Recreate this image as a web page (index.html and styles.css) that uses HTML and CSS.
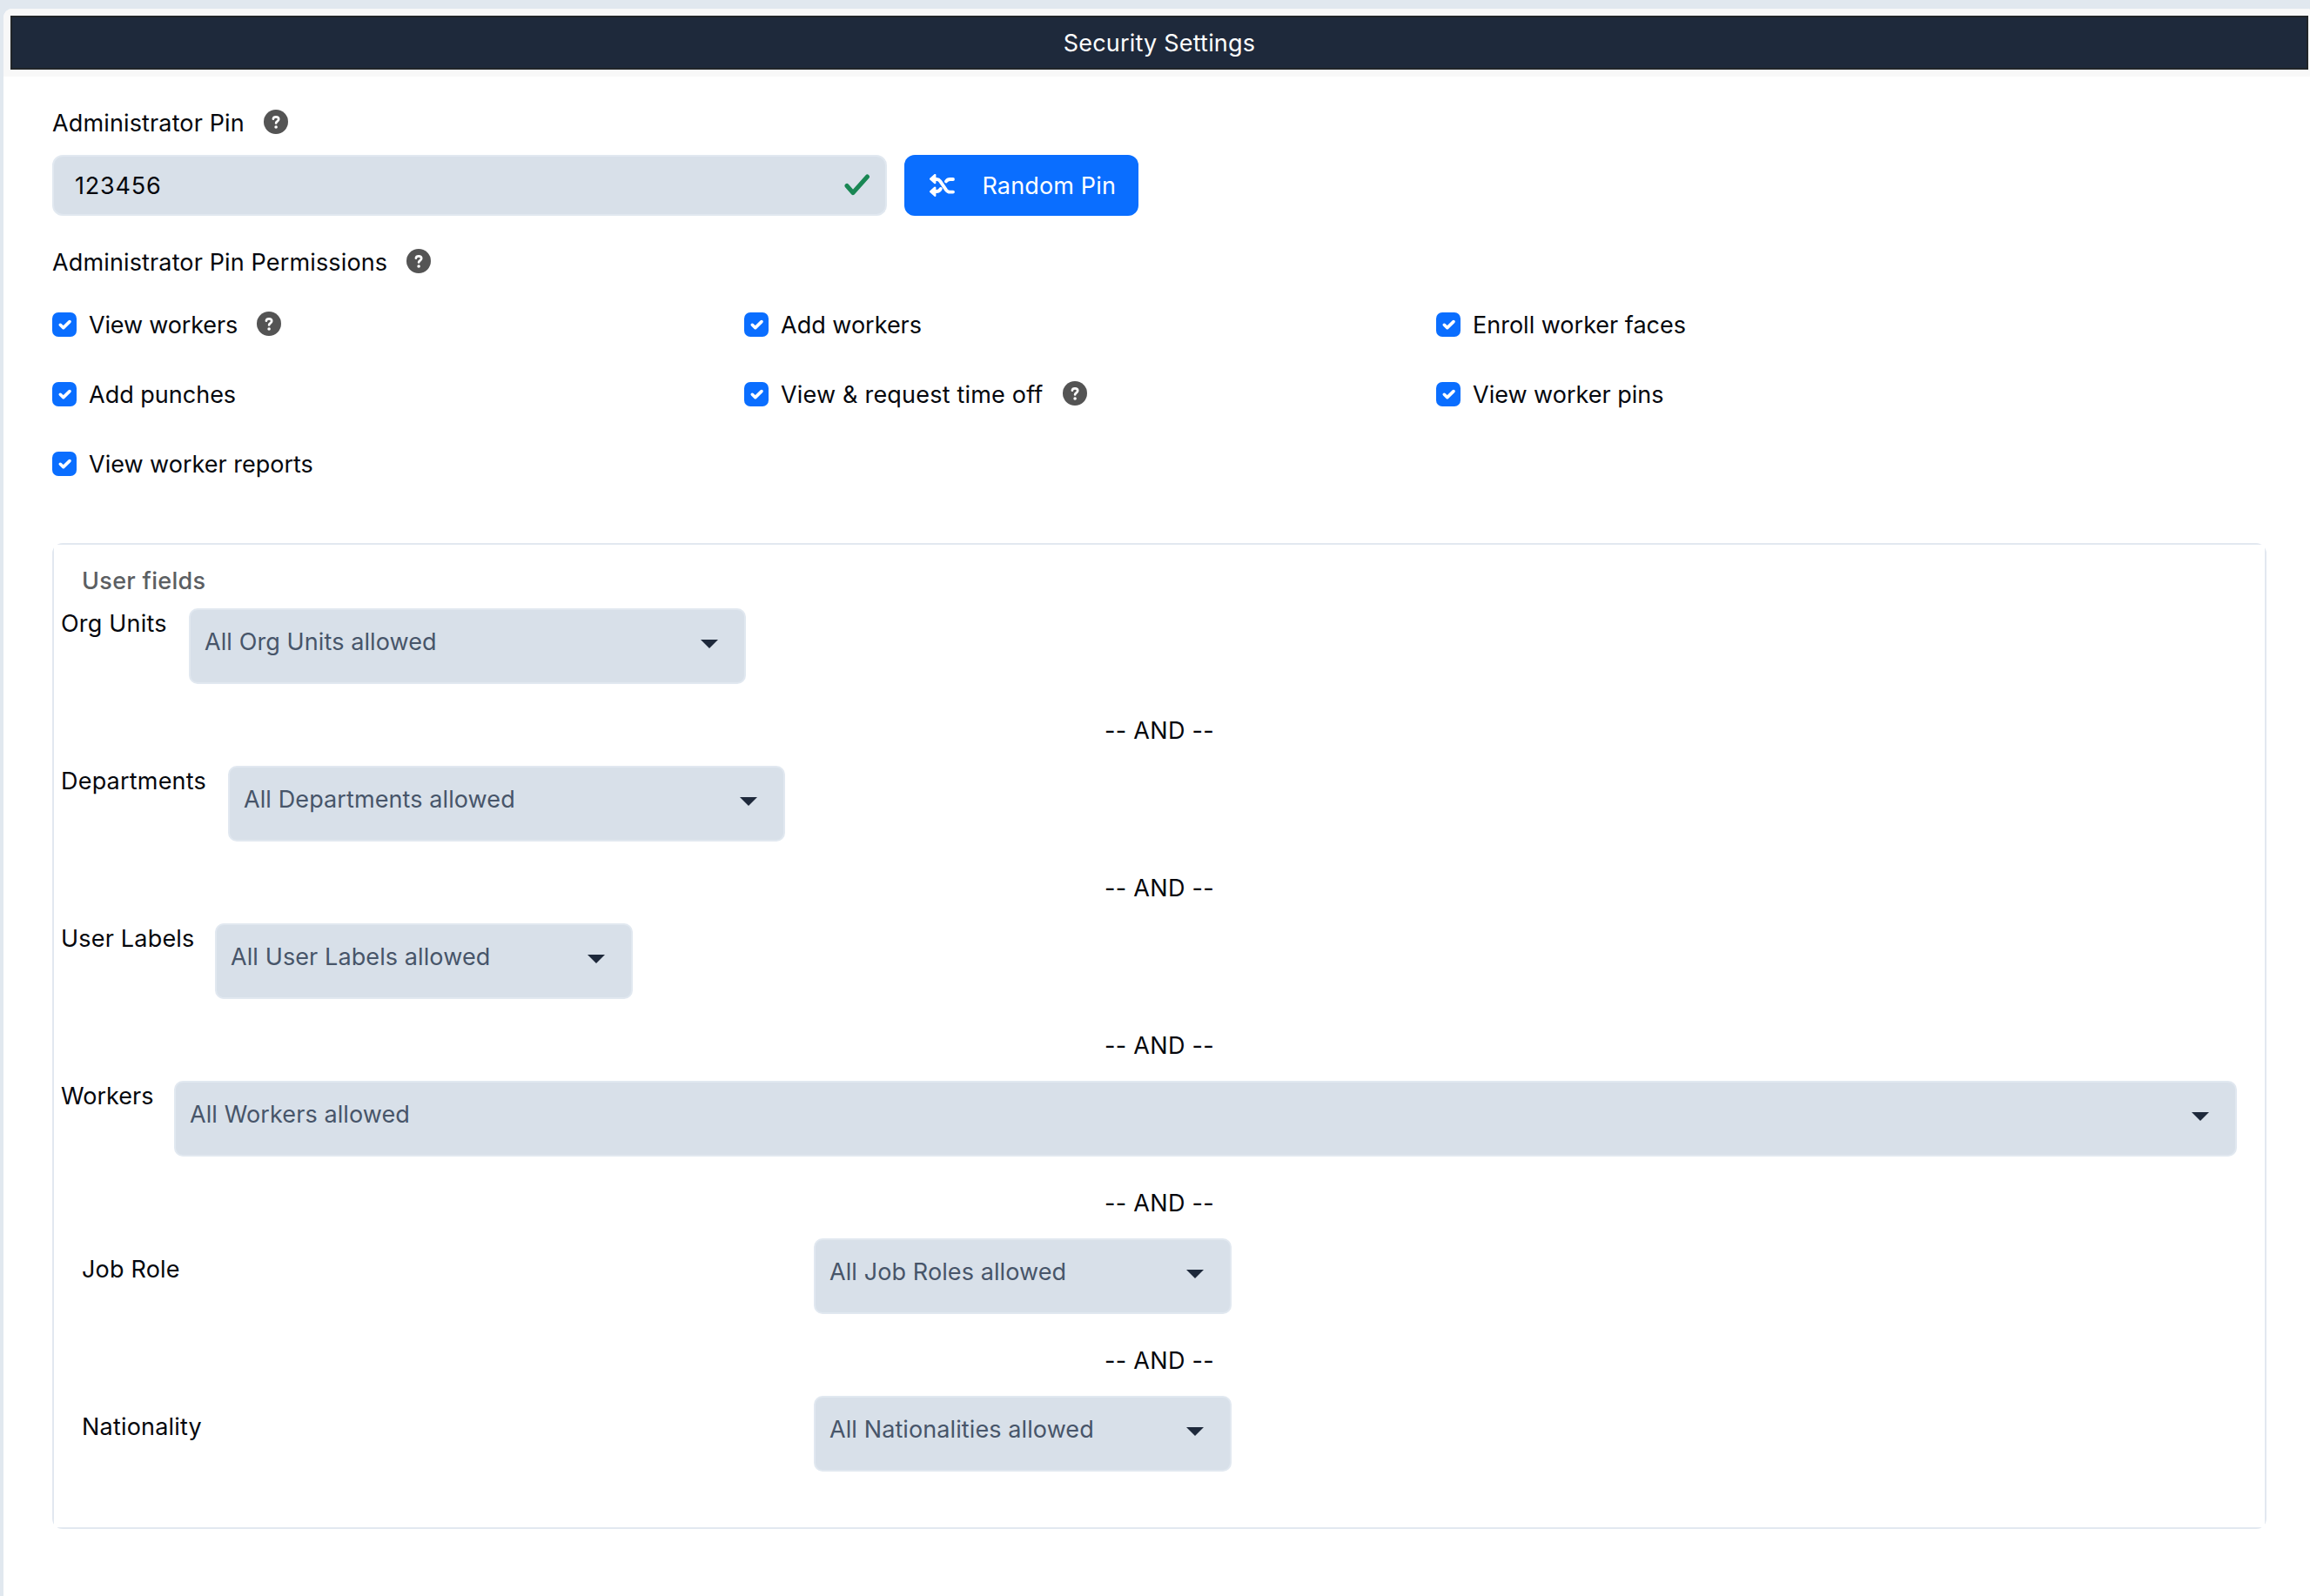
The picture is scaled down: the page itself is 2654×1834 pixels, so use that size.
FILE: index.html
```html
<!DOCTYPE html>
<html lang="en">
<head>
    <meta charset="UTF-8">
    <meta name="viewport" content="width=device-width, initial-scale=1.0">
    <title>Security Settings</title>
    <link rel="stylesheet" href="styles.css">
</head>
<body>
    <!-- shared icons -->
    <svg class="icon-defs" width="0" height="0">
        <symbol id="icon-help" viewBox="0 0 28 28">
            <circle cx="14" cy="14" r="14" fill="#545454"/>
            <path d="M10.900 10.600c.2-1.500 1.400-2.200 3.100-2.200 1.900 0 3.200 1 3.200 2.600 0 2.300-3.100 2.300-3.100 4.500" fill="none" stroke="#fff" stroke-width="2.700" stroke-linecap="round"/>
            <circle cx="14.100" cy="20" r="1.800" fill="#fff"/>
        </symbol>
        <symbol id="icon-check" viewBox="0 0 28 28">
            <path d="M9.300 14.300l3.500 3.300 7.200-7" fill="none" stroke="#fff" stroke-width="3.600" stroke-linecap="round" stroke-linejoin="round"/>
        </symbol>
    </svg>

    <div class="card">
        <div class="card-header">
            <div class="title-bar">Security Settings</div>
        </div>

        <div class="card-body">
            <div class="label-row">
                <span>Administrator Pin</span>
                <svg class="help"><use href="#icon-help"/></svg>
            </div>

            <!-- pin input -->
            <div class="pin-row">
                <div class="pin-input">
                    <span>123456</span>
                    <svg class="valid" viewBox="0 0 30 26"><path d="M3 13.500l7 8L26.500 3" fill="none" stroke="#198754" stroke-width="5" stroke-linecap="round" stroke-linejoin="round"/></svg>
                </div>
                <button class="btn-random">
                    <svg class="shuffle" viewBox="0 0 30 26">
                        <path d="M27 20.600h-3.500c-2 0-3.300-.8-4.400-2.300l-7-10.200c-1-1.400-2.300-2.100-4.100-2.100H6M27 6h-3.500c-2 0-3.500.8-4.600 2.500M12.800 17c-1.200 2.200-2.600 3-4.800 3H6" fill="none" stroke="#fff" stroke-width="3.800" stroke-linecap="round"/>
                        <path d="M1.200 5.600l5-4.500v9zM1.200 20.200l5-4.500v9z" fill="#fff" stroke="#fff" stroke-width="2.400" stroke-linejoin="round"/>
                    </svg>
                    <span>Random Pin</span>
                </button>
            </div>

            <div class="label-row">
                <span>Administrator Pin Permissions</span>
                <svg class="help"><use href="#icon-help"/></svg>
            </div>

            <!-- permissions -->
            <div class="permissions">
                <div class="permission tight"><svg class="checkbox"><use href="#icon-check"/></svg><span>View workers</span><svg class="help"><use href="#icon-help"/></svg></div>
                <div class="permission"><svg class="checkbox"><use href="#icon-check"/></svg><span>Add workers</span></div>
                <div class="permission"><svg class="checkbox"><use href="#icon-check"/></svg><span>Enroll worker faces</span></div>
                <div class="permission"><svg class="checkbox"><use href="#icon-check"/></svg><span>Add punches</span></div>
                <div class="permission loose"><svg class="checkbox"><use href="#icon-check"/></svg><span>View &amp; request time off</span><svg class="help"><use href="#icon-help"/></svg></div>
                <div class="permission"><svg class="checkbox"><use href="#icon-check"/></svg><span>View worker pins</span></div>
                <div class="permission"><svg class="checkbox"><use href="#icon-check"/></svg><span>View worker reports</span></div>
            </div>

            <!-- user fields -->
            <div class="user-fields">
                <div class="fields-inner">
                    <div class="legend">User fields</div>

                    <div class="field">
                        <span class="field-label org">Org Units</span>
                        <div class="select"><span>All Org Units allowed</span><i class="caret"></i></div>
                    </div>
                    <div class="and">-- AND --</div>
                    <div class="field">
                        <span class="field-label dep">Departments</span>
                        <div class="select"><span>All Departments allowed</span><i class="caret"></i></div>
                    </div>
                    <div class="and">-- AND --</div>
                    <div class="field">
                        <span class="field-label lab">User Labels</span>
                        <div class="select small"><span>All User Labels allowed</span><i class="caret"></i></div>
                    </div>
                    <div class="and">-- AND --</div>
                    <div class="field">
                        <span class="field-label wor">Workers</span>
                        <div class="select full"><span>All Workers allowed</span><i class="caret"></i></div>
                    </div>
                    <div class="and">-- AND --</div>
                    <div class="field wide">
                        <span class="field-label">Job Role</span>
                        <div class="select small"><span>All Job Roles allowed</span><i class="caret"></i></div>
                    </div>
                    <div class="and">-- AND --</div>
                    <div class="field wide">
                        <span class="field-label">Nationality</span>
                        <div class="select small"><span>All Nationalities allowed</span><i class="caret"></i></div>
                    </div>
                </div>
            </div>
        </div>
    </div>
</body>
</html>
```
FILE: styles.css
```css
* {
    box-sizing: border-box;
}

body {
    margin: 0;
    padding: 10px 0 0 4px;
    height: 1834px;
    overflow: hidden;
    background: #e1e8ef;
    color: #05070d;
    font-family: Inter, "Liberation Sans", sans-serif;
    font-size: 27px;
    line-height: 42px;
    white-space: nowrap;
}

.icon-defs {
    position: absolute;
}

/* card */
.card {
    height: 1824px;
    background: #fff;
    border-radius: 10px 2px 0 0;
    overflow: hidden;
}

.card-header {
    height: 78px;
    padding: 8px 2px 8px 8px;
    background: #f8f8f8;
}

.title-bar {
    height: 62px;
    border: 2px solid #212529;
    background: #1e293b;
    color: #fff;
    line-height: 59px;
    text-align: center;
    letter-spacing: 0.2px;
}

.card-body {
    padding: 32px 50px 0 56px;
}

.label-row {
    display: flex;
    align-items: center;
    gap: 22px;
    height: 42px;
    letter-spacing: 0.14px;
}

.label-row span {
    padding-top: 1px;
}

.help {
    width: 28px;
    height: 28px;
    margin-top: -2px;
}

/* pin */
.pin-row {
    display: flex;
    gap: 20px;
    margin: 16px 0 32px;
}

.pin-input {
    display: flex;
    justify-content: space-between;
    align-items: center;
    width: 959px;
    height: 70px;
    padding: 0 17px 0 24px;
    border: 2px solid #e1e8f0;
    border-radius: 12px;
    background: #d8e0e9;
}

.pin-input span {
    padding-top: 2px;
    letter-spacing: 0.8px;
}

.valid {
    width: 30px;
    height: 26px;
}

.btn-random {
    display: flex;
    justify-content: space-between;
    align-items: center;
    width: 269px;
    height: 70px;
    padding: 0 26px 0 29px;
    border: none;
    border-radius: 12px;
    background: #0a6eff;
    color: #fff;
    font: inherit;
    letter-spacing: 0.15px;
}

.btn-random span {
    padding-top: 1px;
}

.shuffle {
    width: 30px;
    height: 26px;
}

/* permissions */
.permissions {
    display: grid;
    grid-template-columns: 795px 795px 1fr;
    grid-auto-rows: 80px;
    margin-top: 11px;
}

.permission {
    display: flex;
    align-items: center;
    height: 80px;
}

.permission span {
    margin: 0 22px 0 14px;
    padding-top: 1px;
}

.tight {
    letter-spacing: -0.15px;
}

.loose {
    letter-spacing: 0.2px;
}

.checkbox {
    width: 28px;
    height: 28px;
    border-radius: 7px;
    background: #0a6eff;
}

/* user fields */
.user-fields {
    width: 2544px;
    height: 1133px;
    margin-top: 51px;
    border: 2px solid #e2e8f0;
    border-radius: 12px;
}

/* square corners cover the rounded ones of the border */
.fields-inner {
    height: 100%;
    padding: 21px 32px 0 8px;
    background: #fff;
}

.legend {
    padding-left: 24px;
    color: #5c5f63;
    font-weight: 500;
    line-height: 42px;
    height: 52px;
    letter-spacing: 0.3px;
}

.field {
    display: flex;
    height: 87px;
}

.field-label {
    line-height: 36px;
    letter-spacing: 0.2px;
}

.org {
    width: 147px;
}

.dep {
    width: 192px;
}

.lab {
    width: 177px;
}

.wor {
    width: 130px;
    letter-spacing: 0;
}

.wide {
    padding-left: 24px;
}

.wide .field-label {
    width: 841px;
    line-height: 72px;
}

.select {
    display: flex;
    justify-content: space-between;
    width: 640px;
    height: 87px;
    padding: 0 30px 0 16px;
    border: 2px solid #e1e8f0;
    border-radius: 10px;
    background: #d8e0e9;
    color: #475569;
    line-height: 73px;
    letter-spacing: 0.1px;
}

.small {
    width: 480px;
}

.full {
    flex: 1;
}

.caret {
    width: 20px;
    height: 10px;
    margin-top: 34px;
    background: #1e293b;
    clip-path: polygon(0 0, 100% 0, 50% 100%);
}

.and {
    height: 94px;
    line-height: 108px;
    text-align: center;
    padding-left: 24px;
    letter-spacing: 0.3px;
}
```
